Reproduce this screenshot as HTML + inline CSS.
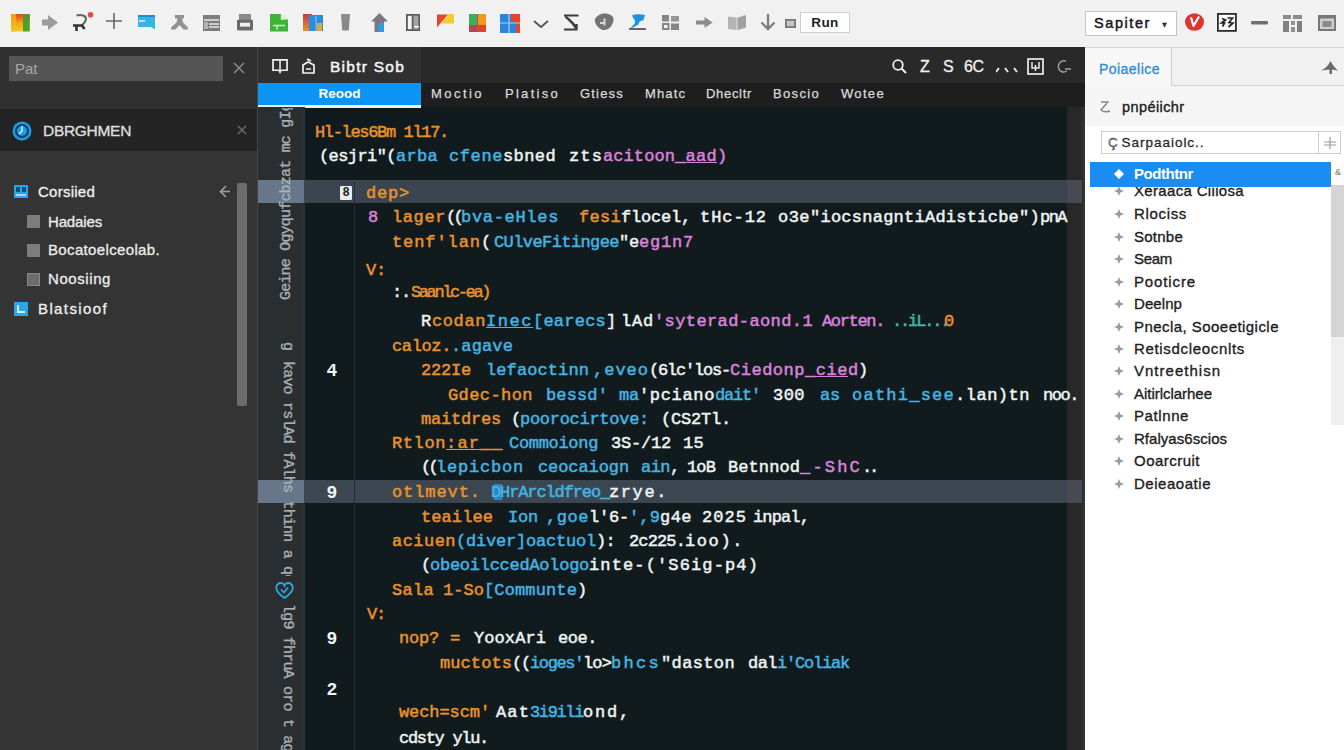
<!DOCTYPE html>
<html lang="en">
<head>
<meta charset="utf-8">
<title>Editor</title>
<style>
*{box-sizing:border-box;margin:0;padding:0}
html,body{width:1344px;height:750px;overflow:hidden;background:#111b1d;font-family:"Liberation Sans",sans-serif}
.abs,.abs>*{position:absolute}
#tb{position:absolute;left:0;top:0;width:1344px;height:48px;background:#f1f1f1;border-bottom:1px solid #d9d9d9}
#tb svg{position:absolute;overflow:visible}
#left{position:absolute;left:0;top:47px;width:258px;height:703px;background:#343434;overflow:hidden}
#ed{position:absolute;left:258px;top:47px;width:827px;height:703px;background:#111b1d;overflow:hidden}
#right{position:absolute;left:1085px;top:47px;width:259px;height:703px;background:#ffffff;overflow:hidden}
.ln{position:absolute;left:-258px;height:28px;width:1344px;line-height:28px;font-family:"Liberation Mono",monospace;font-size:17px;white-space:pre}
.s{position:absolute;top:0;white-space:pre;-webkit-text-stroke:0.5px currentColor}
.t{position:absolute;white-space:pre}
.tab{top:38px;font-size:13px;line-height:18px;color:#dadada;-webkit-text-stroke:.25px #dadada}
.vt{width:20px;writing-mode:vertical-rl;font-family:"Liberation Mono",monospace;font-size:15px;line-height:20px;color:#a8b0b5;letter-spacing:-.8px;overflow:hidden;-webkit-text-stroke:.35px #a8b0b5}
.num{left:60px;width:28px;text-align:center;font:bold 18px/24px "Liberation Mono",monospace;color:#f2f4f4}
.hi{top:10px;font:16px/20px "Liberation Sans",sans-serif;color:#f0f0f0;-webkit-text-stroke:.3px #f0f0f0}
</style>
</head>
<body>
<div id="tb">
<!-- 1 colour square -->
<svg style="left:10.700px;top:13.600px" width="18.700" height="17.400"><defs><linearGradient id="g1" x1="0" y1="0" x2="0" y2="1"><stop offset="0" stop-color="#e04a1c"/><stop offset=".55" stop-color="#f4a818"/><stop offset="1" stop-color="#f8cc20"/></linearGradient><linearGradient id="g1b" x1="0" y1="0" x2="0" y2="1"><stop offset="0" stop-color="#f09a18"/><stop offset="1" stop-color="#f8c420"/></linearGradient><linearGradient id="g1c" x1="0" y1="0" x2="0" y2="1"><stop offset="0" stop-color="#5c8a38"/><stop offset=".5" stop-color="#4aa02e"/><stop offset="1" stop-color="#4aa628"/></linearGradient></defs><rect width="18.700" height="17.400" rx="1" fill="url(#g1)"/><rect width="5" height="17.400" fill="url(#g1b)"/><rect x="12" width="6.700" height="17.400" fill="url(#g1c)"/></svg>
<!-- 2 grey arrow -->
<svg style="left:42px;top:14.500px" width="16" height="15"><path d="M0 4.500h6V0l10 7.500L6 15v-4.500H0z" fill="#9c9c9c"/></svg>
<!-- 3 R icon with red dot -->
<svg style="left:72px;top:13px" width="22" height="19"><path d="M4.500 2.500C9 1 14.500 2.500 14 6.500 13.500 9 12 10.500 10 12" fill="none" stroke="#5e665e" stroke-width="2"/><path d="M1 12.500h10.500M4.500 12.500v5.500M10 12.500l2.500 3.500" fill="none" stroke="#333" stroke-width="2.6"/><circle cx="18.500" cy="1.800" r="2.800" fill="#e4483e"/></svg>
<!-- 4 plus -->
<svg style="left:105px;top:12px" width="18" height="18"><path d="M9 1v16M1 9h16" stroke="#666" stroke-width="1.6"/></svg>
<!-- 5 blue card -->
<svg style="left:138px;top:14.500px" width="17" height="15"><path d="M0 0h17v14.500L13 12H0z" fill="#36b4ea"/><path d="M0 1h17" stroke="#1f8ccc" stroke-width="2"/><path d="M1 6h6" stroke="#e8f6ff" stroke-width="1.500"/></svg>
<!-- 6 grey figure -->
<svg style="left:171px;top:15px" width="17" height="15"><path d="M4 0h9v3.500h-2l1 4 5 5v2h-4.500l-4-4.500-4 4.500H0v-2l5.500-5 1-4H4z" fill="#929292"/></svg>
<!-- 7 table -->
<svg style="left:203px;top:14.500px" width="17" height="16"><rect width="17" height="16" fill="#7d7d7d"/><path d="M1 5h15M6 9h10M6 12h10" stroke="#e8e8e8" stroke-width="1.4"/><rect x="1" y="7" width="4" height="7" fill="#e8e8e8" opacity=".5"/></svg>
<!-- 8 printer -->
<svg style="left:237px;top:14px" width="16" height="17" viewBox="0 0 16 17.500" preserveAspectRatio="none"><rect x="2" width="12" height="7" fill="#8a8a8a"/><rect y="6" width="16" height="11" rx="1" fill="#6a6a6a"/><rect x="3" y="9" width="10" height="4" fill="#eee"/></svg>
<!-- 9 green doc -->
<svg style="left:270px;top:14px" width="18" height="17.500"><path d="M0 0h11l7 5.500v12H0z" fill="#3cb43a"/><path d="M11 0v5.500h7z" fill="#e8f6e8"/><path d="M11.500 0v6" stroke="#e8f6e8" stroke-width="1.300"/><path d="M3 11.500h12M7 11.500v4" stroke="#c8ecc8" stroke-width="1.600"/></svg>
<!-- 10 blue/orange docs -->
<svg style="left:302.500px;top:14px" width="20" height="17"><defs><linearGradient id="g10" x1="0" y1="0" x2="0" y2="1"><stop offset="0" stop-color="#c03e48"/><stop offset="1" stop-color="#e8902a"/></linearGradient></defs><rect width="9" height="17" fill="url(#g10)"/><rect x="6" y="1" width="14" height="16" fill="#2a8ee0"/><rect x="12" y="2" width="2" height="15" fill="#58aef0"/><rect x="14" y="9" width="5" height="8" fill="#e0a83a"/></svg>
<!-- 11 pillar -->
<svg style="left:341px;top:14px" width="9" height="17"><path d="M0 0h9l-1.200 16.500H1.200z" fill="#8a8a8a"/></svg>
<!-- 12 up arrow house -->
<svg style="left:371px;top:13px" width="17" height="19"><path d="M8.500 0l8.500 8.500h-4V19H3.500V8.500H0z" fill="#7a7684"/><rect x="7.500" y="10" width="5.500" height="9" fill="#2a9ee0"/></svg>
<!-- 13 book panel -->
<svg style="left:406px;top:14px" width="14" height="17"><rect x=".8" y=".8" width="12.400" height="15.400" fill="#a4a4a4" stroke="#5a5a5a" stroke-width="1.600"/><rect x="2" y="2" width="3.500" height="13" fill="#f4f4f4"/><rect x="6" y="1.600" width="1.400" height="14" fill="#5a5a5a"/><rect x="8" y="12" width="5" height="1.500" fill="#eee"/></svg>
<!-- 14 flag -->
<svg style="left:437px;top:14px" width="17" height="14"><path d="M0 .5h11L0 13.500z" fill="#e8452c"/><path d="M11.500 0H17v9.500H4.500z" fill="#f4cc2c"/></svg>
<!-- 15 grid colours -->
<svg style="left:469px;top:13.500px" width="17" height="18"><rect width="17" height="18" fill="#c8463a"/><rect width="8" height="11" fill="#3dae5a"/><rect x="9" width="8" height="11" fill="#f0981c"/><rect y="11.500" width="8" height="6.500" fill="#ae4a58"/><rect x="9" y="11.500" width="8" height="6.500" fill="#e0432c"/></svg>
<!-- 16 blue/red grid -->
<svg style="left:500px;top:14px" width="20" height="19"><rect width="20" height="19" rx="1" fill="#2a86dc"/><path d="M11 0h9v19h-4V8h-5z" fill="#e4452c"/><path d="M0 9h20M9 0v19" stroke="#dceeff" stroke-width="1.2" opacity=".7"/></svg>
<!-- 17 chevron -->
<svg style="left:533px;top:20px" width="16" height="9"><path d="M1 1l7 6 7-6" fill="none" stroke="#555" stroke-width="1.8"/></svg>
<!-- 18 sigma -->
<svg style="left:563px;top:14px" width="17" height="17"><path d="M1 1.500h14.500M1 15.500h13.500" fill="none" stroke="#3c3c3c" stroke-width="2.2"/><path d="M2.500 2.500C6 6 10 8 13 14M13.500 10v5" fill="none" stroke="#3c3c3c" stroke-width="2.4"/></svg>
<!-- 19 shield -->
<svg style="left:594px;top:13px" width="20" height="18"><path d="M1 6C3 2 8 0 12 0.500 16 1 20 3 19.500 7 19 12 16 16 11 17 7 17.500 3 14 1.500 10 1 8.500 0.500 7.500 1 6z" fill="#747474"/><path d="M6 10h4M10.500 5.500v7" stroke="#d8d8d8" stroke-width="2"/></svg>
<!-- 20 blue person -->
<svg style="left:628px;top:14px" width="19" height="17"><path d="M4 1.500C7 0 13 0 17 1l-1.500 5-4 1.500-1 3L6 13l-4 2 5-6V7z" fill="#1f93e2"/><path d="M1 15h17" stroke="#555" stroke-width="1.8"/></svg>
<!-- 21 four squares -->
<svg style="left:662px;top:14.700px" width="17" height="15"><rect width="7" height="6.500" fill="#858585"/><rect x="9" y="1" width="8" height="5.500" fill="#969696"/><rect x="1" y="9" width="5.500" height="5" fill="#f4f4f4" stroke="#858585" stroke-width="2"/><rect x="9" y="8.500" width="8" height="6.500" fill="#858585"/></svg>
<!-- 22 arrow -->
<svg style="left:696px;top:17px" width="16.500" height="11"><path d="M0 3.500h8.500V0l8 5.500-8 5.500V7.500H0z" fill="#8c8c8c"/></svg>
<!-- 23 book -->
<svg style="left:728px;top:14.700px" width="18" height="15"><path d="M0 1.500l8 1v12.500l-8-1z" fill="#b4b4b4"/><path d="M10 2.500l8-2.500v12.500l-8 2.500z" fill="#a2a2a2"/><rect x="8" y="2.500" width="2" height="12.500" fill="#c8c8c8"/></svg>
<!-- 24 down arrow -->
<svg style="left:760px;top:14px" width="16" height="17"><path d="M8 0v14.500M1.500 8.500l6.500 6.500 6.500-6.500" fill="none" stroke="#7c7c7c" stroke-width="2.300"/></svg>
<!-- 25 small square -->
<svg style="left:784.500px;top:18.500px" width="11" height="9"><rect x=".9" y=".9" width="9.200" height="7.200" fill="#c4c4c4" stroke="#777" stroke-width="1.800"/></svg>
<div class="t" style="left:800px;top:12px;width:50px;height:21px;background:#fff;border:1px solid #cfcfcf;font-size:13.5px;line-height:19px;text-align:center;color:#222;font-weight:bold;letter-spacing:.4px">Run</div>
<div class="t" style="left:1085px;top:11px;width:92px;height:25px;background:#fff;border:1px solid #c4c4c4;font-size:14.5px;line-height:23px;padding-left:8px;color:#1a1a1a;-webkit-text-stroke:.5px #1a1a1a"><span style="letter-spacing:1.58px">Sapiter</span><span style="position:absolute;left:75px;top:1px;font-size:7px;color:#333">&#9660;</span></div>
<!-- red circle -->
<svg style="left:1185px;top:13px" width="19" height="18"><ellipse cx="9.500" cy="9" rx="9.500" ry="8.800" fill="#e1322e"/><path d="M6 4.500l2.500 8.500L14 3.500" stroke="#fff" stroke-width="2.200" fill="none" stroke-linejoin="round"/></svg>
<!-- boxed icon -->
<svg style="left:1217px;top:13px" width="20" height="19"><rect x=".9" y=".9" width="18" height="17" fill="#fbfbfb" stroke="#222" stroke-width="1.700"/><path d="M5 5.500l3.500 1.500-4 3 3 0-2 3.500M10.500 5h5l-3.500 4.500 4 .5-4.500 4" fill="none" stroke="#222" stroke-width="1.700"/></svg>
<!-- minus -->
<svg style="left:1251px;top:21px" width="17" height="4"><rect width="17" height="3.4" rx="1" fill="#6e6e6e"/></svg>
<!-- grid -->
<svg style="left:1283px;top:14.500px" width="19" height="17"><rect width="8" height="4" fill="#8a8a8a"/><rect x="10" width="9" height="4" fill="#8a8a8a"/><rect y="6" width="6" height="11" fill="#808080"/><rect x="8" y="6" width="4" height="4" fill="#909090"/><rect x="14" y="6" width="5" height="11" fill="#808080"/><rect x="8" y="12" width="4" height="5" fill="#909090"/></svg>
<!-- box -->
<svg style="left:1317.500px;top:14.500px" width="18" height="16"><rect x="1" y="1" width="16" height="14" fill="#cfcfcf" stroke="#787878" stroke-width="2"/><rect x="1" y="1" width="16" height="2.500" fill="#787878"/><rect x="4.500" y="6" width="9" height="6" fill="#8a8a8a"/></svg>
</div>
<div id="left">
<div class="t" style="left:0;top:0;width:258px;height:62px;background:#303030"></div>
<div class="t" style="left:9px;top:9px;width:214px;height:25px;background:#555555;color:#a8a8a8;font-size:15px;line-height:25px;padding-left:6px">Pat</div>
<svg style="position:absolute;left:233px;top:15px" width="12" height="12"><path d="M1 1l10 10M11 1L1 11" stroke="#888" stroke-width="1.6"/></svg>
<div class="t" style="left:0;top:62px;width:258px;height:42px;background:#242424"></div>
<svg style="position:absolute;left:12px;top:74px" width="20" height="20"><circle cx="10" cy="10" r="9.5" fill="#1c9be6"/><circle cx="10" cy="10" r="6" fill="none" stroke="#0a3c66" stroke-width="2"/><path d="M10 5v5l-3 3" stroke="#cfeaff" stroke-width="1.6" fill="none"/></svg>
<div class="t" style="left:43px;top:74px;font-size:15.5px;line-height:20px;color:#dcdcdc;-webkit-text-stroke:.4px #dcdcdc"><span style="letter-spacing:-0.30px">DBRGHMEN</span></div>
<svg style="position:absolute;left:237px;top:77.500px" width="10" height="10"><path d="M1 1l8 8M9 1L1 9" stroke="#6a6a6a" stroke-width="1.5"/></svg>

<svg style="position:absolute;left:14px;top:138px" width="14" height="13"><rect width="14" height="13" fill="#2aa6e8"/><path d="M2 2h4v5H2zM8 2h4v5H8z" fill="#0d4f80"/><path d="M2 10h10" stroke="#d8f0ff" stroke-width="1.4"/></svg>
<div class="t" style="left:38px;top:135px;font-size:15px;line-height:20px;color:#f0f0f0;-webkit-text-stroke:.3px #f0f0f0"><span style="letter-spacing:0.25px">Corsiied</span></div>
<svg style="position:absolute;left:219px;top:138px" width="12" height="13"><path d="M7 1L1.5 6.5 7 12M2 6.500h9" fill="none" stroke="#a0a0a0" stroke-width="1.6"/></svg>
<div class="t" style="left:237px;top:136px;width:10px;height:223px;background:#6c6c6c;border-radius:2px"></div>

<div class="t" style="left:27px;top:168px;width:13px;height:13px;background:#7c7c7c"></div>
<div class="t" style="left:48px;top:165px;font-size:15px;line-height:20px;color:#ececec;-webkit-text-stroke:.3px #ececec"><span style="letter-spacing:-0.15px">Hadaies</span></div>
<div class="t" style="left:27px;top:197px;width:13px;height:13px;background:#7c7c7c"></div>
<div class="t" style="left:48px;top:193px;font-size:15px;line-height:20px;color:#ececec;-webkit-text-stroke:.3px #ececec"><span style="letter-spacing:0.35px">Bocatoelceolab.</span></div>
<div class="t" style="left:27px;top:226px;width:13px;height:13px;background:#6c6c6c;border:1px solid #888"></div>
<div class="t" style="left:48px;top:222px;font-size:15px;line-height:20px;color:#ececec;-webkit-text-stroke:.3px #ececec"><span style="letter-spacing:0.58px">Noosiing</span></div>
<svg style="position:absolute;left:14px;top:255px" width="14" height="14"><rect width="14" height="14" fill="#2aa6e8"/><path d="M4 3v7h7" stroke="#d8f0ff" stroke-width="1.8" fill="none"/></svg>
<div class="t" style="left:38px;top:252px;font-size:15px;line-height:20px;color:#f0f0f0;-webkit-text-stroke:.3px #f0f0f0"><span style="letter-spacing:1.39px">Blatsioof</span></div>
<div class="t" style="left:257px;top:0;width:1px;height:703px;background:#454545"></div>
</div>
<div id="ed">
<!-- header -->
<div class="t" style="left:0;top:0;width:827px;height:36px;background:#292929"></div>
<div class="t" style="left:0;top:0;width:163px;height:36px;background:#303030"></div>
<svg style="position:absolute;left:14px;top:11.500px" width="17" height="15" viewBox="0 0 18 16"><path d="M1 1h15v11H9.500l-1 2-1-2H1z" fill="none" stroke="#f2f2f2" stroke-width="1.8"/><path d="M8.500 1v11" stroke="#f2f2f2" stroke-width="1.6"/></svg>
<svg style="position:absolute;left:43px;top:11px" width="15" height="16"><path d="M2 15V7l5-3 6 3v8zM6 1l4 2M5 11h5" fill="none" stroke="#f2f2f2" stroke-width="1.7"/></svg>
<div class="t" style="left:72px;top:10px;font-size:15.5px;line-height:20px;color:#f4f4f4;-webkit-text-stroke:.5px #f4f4f4"><span style="letter-spacing:1.25px">Bibtr Sob</span></div>
<svg style="position:absolute;left:634px;top:12px" width="15" height="15"><circle cx="6" cy="6" r="4.800" fill="none" stroke="#f0f0f0" stroke-width="1.8"/><path d="M9.500 9.500l4.500 4.500" stroke="#f0f0f0" stroke-width="2"/></svg>
<div class="t hi" style="left:662px">Z</div>
<div class="t hi" style="left:685px">S</div>
<div class="t hi" style="left:706px;letter-spacing:-.5px">6C</div>
<svg style="position:absolute;left:738px;top:20px" width="22" height="6"><path d="M0 5l3-4M9 1l3 4M18 1l3 4" stroke="#e8e8e8" stroke-width="2"/></svg>
<svg style="position:absolute;left:769px;top:11px" width="17" height="17"><rect x="1" y="1" width="15" height="15" fill="none" stroke="#ececec" stroke-width="1.7"/><path d="M5 4v6h7V4M8.500 7v6" stroke="#ececec" stroke-width="1.5" fill="none"/></svg>
<svg style="position:absolute;left:799px;top:13px" width="15" height="14"><path d="M9 1C4 0 1 3 1.500 7.500 2 12 7 13 10 11M8 9h6" fill="none" stroke="#a0a0a0" stroke-width="1.5"/></svg>
<!-- tab row -->
<div class="t" style="left:0;top:36px;width:827px;height:24px;background:#1e1e1e"></div>
<div class="t" style="left:0;top:36px;width:163px;height:22px;background:#0b94f4"></div>
<div class="t" style="left:0;top:58px;width:163px;height:2.5px;background:#e6f2fc"></div>
<div class="t" style="left:0;top:38px;width:163px;text-align:center;font-size:13.5px;line-height:18px;color:#fff;font-weight:bold">Reood</div>
<div class="t tab" style="left:173px"><span style="letter-spacing:2.45px">Moctio</span></div>
<div class="t tab" style="left:247px"><span style="letter-spacing:2.28px">Platiso</span></div>
<div class="t tab" style="left:322px"><span style="letter-spacing:1.19px">Gtiess</span></div>
<div class="t tab" style="left:387px"><span style="letter-spacing:1.12px">Mhatc</span></div>
<div class="t tab" style="left:448px"><span style="letter-spacing:0.69px">Dhecltr</span></div>
<div class="t tab" style="left:515px"><span style="letter-spacing:1.33px">Boscio</span></div>
<div class="t tab" style="left:583px"><span style="letter-spacing:1.33px">Wotee</span></div>
<!-- gutter -->
<div class="t" style="left:0;top:60px;width:46px;height:643px;background:#2b2e30"></div>
<div class="t" style="left:45px;top:60px;width:1.500px;height:643px;background:#22383f"></div>
<!-- highlight bands -->
<div class="t" style="left:0;top:133px;width:46px;height:23px;background:#66778a"></div>
<div class="t" style="left:46px;top:133px;width:778px;height:23px;background:#3a454f"></div>
<div class="t" style="left:0;top:433px;width:46px;height:23px;background:#66778a"></div>
<div class="t" style="left:46px;top:433px;width:778px;height:23px;background:#3b4650"></div>
<!-- indent guide -->
<div class="t" style="left:95.500px;top:134px;width:1.500px;height:569px;background:#1f3038"></div>
<!-- gutter vertical text -->
<div class="t vt" style="left:19px;top:61px;height:192px;transform:rotate(180deg);text-align:right">Geine Ogyqufcbzat mc gIglo</div>
<div class="t vt" style="left:19px;top:295px;height:12px">g</div>
<div class="t vt" style="left:19px;top:314px;height:215px">kavo rslAd fAlhs thinn a qelaoscq</div>
<svg style="position:absolute;left:17px;top:534px" width="19" height="18"><path d="M9.500 17C2 12 0 7.500 2 4 4 1 8.500 1.500 9.500 4.500c1-3 5.500-3.500 7.500-.5 2 3.500 0 8-7.500 13z" fill="none" stroke="#2aa8e6" stroke-width="1.8"/><path d="M6 8.500l3 3 4-5" fill="none" stroke="#2aa8e6" stroke-width="1.7"/></svg>
<div class="t vt" style="left:19px;top:557px;height:146px">lg9 fhruA oro t ago zoe</div>
<!-- line numbers -->
<div class="t" style="left:82px;top:139px;width:12px;height:14px;background:#e8ecee;color:#1a2226;font:bold 12px/14px 'Liberation Mono',monospace;text-align:center;border-radius:1px">8</div>
<div class="t num" style="top:312px">4</div>
<div class="t num" style="top:434px">9</div>
<div class="t num" style="top:580px">9</div>
<div class="t num" style="top:631px">2</div>
<!-- right scrollbar -->
<div class="t" style="left:809px;top:60px;width:18px;height:643px;background:linear-gradient(90deg,rgba(40,40,40,.92),rgba(44,44,44,.8) 70%,rgba(60,60,60,.8))"></div>
<div class="t" style="left:809px;top:133px;width:15px;height:23px;background:#474b51"></div>
<div class="t" style="left:809px;top:433px;width:15px;height:23px;background:#474b51"></div>
<div class="t" style="left:236px;top:437px;width:8px;height:16px;background:#2a8fdc;opacity:.85"></div>
<div class="ln" style="top:72px"><span class="s" style="left:315px;color:#e8922e;letter-spacing:-1.34px;">Hl-les6Bm 1l17.</span></div>
<div class="ln" style="top:96px"><span class="s" style="left:319px;color:#eef3f3;letter-spacing:-0.58px;">(esjri&quot;(</span><span class="s" style="left:396px;color:#45b4e2;letter-spacing:0.30px;">arba</span><span class="s" style="left:449px;color:#45b4e2;letter-spacing:0.60px;">cfene</span><span class="s" style="left:503px;color:#eef3f3;letter-spacing:0.40px;">sbned</span><span class="s" style="left:569px;color:#eef3f3;letter-spacing:1.13px;">zts</span><span class="s" style="left:603px;color:#d982dc;letter-spacing:0.08px;">acitoon</span><span class="s" style="left:675px;color:#d982dc;letter-spacing:0.30px;text-decoration:underline;">_aad</span><span class="s" style="left:717px;color:#d982dc;letter-spacing:0.80px;">)</span></div>
<div class="ln" style="top:133px"><span class="s" style="left:366px;color:#e8922e;letter-spacing:0.80px;">dep&gt;</span></div>
<div class="ln" style="top:157px"><span class="s" style="left:368px;color:#d982dc;letter-spacing:0.80px;">8</span><span class="s" style="left:392px;color:#e8922e;letter-spacing:0.60px;">lager</span><span class="s" style="left:446px;color:#eef3f3;letter-spacing:-2.70px;">((</span><span class="s" style="left:461px;color:#45b4e2;letter-spacing:0.69px;">bva-eHles</span><span class="s" style="left:579px;color:#e8922e;letter-spacing:0.30px;">fesi</span><span class="s" style="left:621px;color:#eef3f3;letter-spacing:-0.20px;">flocel,</span><span class="s" style="left:700px;color:#eef3f3;letter-spacing:0.96px;">tHc-12</span><span class="s" style="left:778px;color:#eef3f3;letter-spacing:0.46px;">o3e</span><span class="s" style="left:810px;color:#eef3f3;letter-spacing:0.25px;">&quot;iocsnagntiAdisticbe&quot;)</span><span class="s" style="left:1040px;color:#eef3f3;letter-spacing:-1.54px;">pnA</span></div>
<div class="ln" style="top:182px"><span class="s" style="left:392px;color:#e8922e;letter-spacing:0.92px;">tenf&#x27;lan</span><span class="s" style="left:481px;color:#eef3f3;letter-spacing:2.80px;">(</span><span class="s" style="left:494px;color:#45b4e2;letter-spacing:-0.59px;">CUlveFitingee</span><span class="s" style="left:619px;color:#eef3f3;letter-spacing:-0.20px;">&quot;e</span><span class="s" style="left:639px;color:#d982dc;letter-spacing:0.80px;">eg1n7</span></div>
<div class="ln" style="top:210px"><span class="s" style="left:366px;color:#e8922e;letter-spacing:-0.20px;">V:</span></div>
<div class="ln" style="top:232px"><span class="s" style="left:392px;color:#eef3f3;letter-spacing:-1.20px;">:.</span><span class="s" style="left:411px;color:#e8922e;letter-spacing:-2.40px;">Saanlc-ea)</span></div>
<div class="ln" style="top:261px"><span class="s" style="left:421px;color:#eef3f3;letter-spacing:0.80px;">R</span><span class="s" style="left:432px;color:#e8922e;letter-spacing:0.60px;">codan</span><span class="s" style="left:486px;color:#45b4e2;letter-spacing:1.55px;text-decoration:underline;">Inec</span><span class="s" style="left:533px;color:#45b4e2;letter-spacing:0.23px;">[earecs</span><span class="s" style="left:606px;color:#eef3f3;letter-spacing:-0.20px;">]</span><span class="s" style="left:621px;color:#eef3f3;letter-spacing:0.80px;">lAd</span><span class="s" style="left:654px;color:#d982dc;letter-spacing:0.40px;">&#x27;syterad-aond.1</span><span class="s" style="left:822px;color:#d982dc;letter-spacing:-1.34px;">Aorten.</span><span class="s" style="left:892px;color:#3fb8a8;letter-spacing:-2.14px;">..iL...</span><span class="s" style="left:944px;color:#e8922e;letter-spacing:1.00px;">0</span></div>
<div class="ln" style="top:286px"><span class="s" style="left:392px;color:#e8922e;letter-spacing:-0.37px;">caloz.</span><span class="s" style="left:451px;color:#45b4e2;letter-spacing:0.13px;">.agave</span></div>
<div class="ln" style="top:310px"><span class="s" style="left:421px;color:#e8922e;letter-spacing:-0.20px;">222Ie</span><span class="s" style="left:486px;color:#45b4e2;letter-spacing:0.10px;">lefaoctinn</span><span class="s" style="left:593px;color:#45b4e2;letter-spacing:1.00px;">,eveo</span><span class="s" style="left:649px;color:#eef3f3;letter-spacing:-1.20px;">(6lc&#x27;los-</span><span class="s" style="left:730px;color:#d982dc;letter-spacing:0.51px;">Ciedonp</span><span class="s" style="left:805px;color:#d982dc;letter-spacing:0.55px;text-decoration:underline;">_cie</span><span class="s" style="left:848px;color:#d982dc;letter-spacing:-0.20px;">d</span><span class="s" style="left:858px;color:#eef3f3;letter-spacing:0.80px;">)</span></div>
<div class="ln" style="top:335px"><span class="s" style="left:448px;color:#e8922e;letter-spacing:0.42px;">Gdec-hon</span><span class="s" style="left:546px;color:#45b4e2;letter-spacing:0.13px;">bessd&#x27;</span><span class="s" style="left:619px;color:#45b4e2;letter-spacing:-0.20px;">ma</span><span class="s" style="left:639px;color:#eef3f3;letter-spacing:0.66px;">&#x27;pciano</span><span class="s" style="left:715px;color:#45b4e2;letter-spacing:-1.20px;">dait&#x27;</span><span class="s" style="left:773px;color:#eef3f3;letter-spacing:0.46px;">300</span><span class="s" style="left:820px;color:#45b4e2;letter-spacing:-0.20px;">as</span><span class="s" style="left:852px;color:#45b4e2;letter-spacing:1.24px;">oathi_see</span><span class="s" style="left:955px;color:#eef3f3;letter-spacing:0.51px;">.lan)tn</span><span class="s" style="left:1043px;color:#eef3f3;letter-spacing:-1.45px;">noo.</span></div>
<div class="ln" style="top:359px"><span class="s" style="left:421px;color:#e8922e;letter-spacing:-0.20px;">maitdres</span><span class="s" style="left:511px;color:#eef3f3;letter-spacing:-1.20px;">(</span><span class="s" style="left:520px;color:#45b4e2;letter-spacing:-0.28px;">poorocirtove:</span><span class="s" style="left:661px;color:#eef3f3;letter-spacing:-0.20px;">(CS2Tl.</span></div>
<div class="ln" style="top:383px"><span class="s" style="left:392px;color:#e8922e;letter-spacing:0.60px;">Rtlon</span><span class="s" style="left:446px;color:#e8922e;letter-spacing:1.20px;text-decoration:underline;">:ar__</span><span class="s" style="left:509px;color:#45b4e2;letter-spacing:-0.31px;">Commoiong</span><span class="s" style="left:611px;color:#eef3f3;letter-spacing:-0.20px;">3S-/12</span><span class="s" style="left:683px;color:#eef3f3;letter-spacing:0.30px;">15</span></div>
<div class="ln" style="top:407px"><span class="s" style="left:421px;color:#eef3f3;letter-spacing:-2.70px;">((</span><span class="s" style="left:436px;color:#45b4e2;letter-spacing:0.80px;">lepicbon</span><span class="s" style="left:538px;color:#45b4e2;letter-spacing:-0.09px;">ceocaiogn</span><span class="s" style="left:641px;color:#45b4e2;letter-spacing:-0.54px;">ain</span><span class="s" style="left:670px;color:#eef3f3;letter-spacing:-0.20px;">,</span><span class="s" style="left:687px;color:#eef3f3;letter-spacing:-0.87px;">1oB</span><span class="s" style="left:728px;color:#eef3f3;letter-spacing:0.08px;">Betnnod</span><span class="s" style="left:800px;color:#d982dc;letter-spacing:2.20px;">_-ShC</span><span class="s" style="left:862px;color:#eef3f3;letter-spacing:-3.20px;">..</span></div>
<div class="ln" style="top:432px"><span class="s" style="left:392px;color:#e8922e;letter-spacing:0.92px;">otlmevt.</span><span class="s" style="left:491px;color:#45b4e2;letter-spacing:-1.12px;">DHrArcldfreo_</span><span class="s" style="left:609px;color:#eef3f3;letter-spacing:1.60px;">zrye.</span></div>
<div class="ln" style="top:457px"><span class="s" style="left:421px;color:#e8922e;letter-spacing:0.08px;">teailee</span><span class="s" style="left:508px;color:#45b4e2;letter-spacing:-0.20px;">Ion</span><span class="s" style="left:546px;color:#45b4e2;letter-spacing:0.55px;">,goe</span><span class="s" style="left:589px;color:#eef3f3;letter-spacing:-0.20px;">l&#x27;6-</span><span class="s" style="left:629px;color:#45b4e2;letter-spacing:0.13px;">&#x27;,9</span><span class="s" style="left:660px;color:#eef3f3;letter-spacing:0.46px;">g4e</span><span class="s" style="left:702px;color:#eef3f3;letter-spacing:1.05px;">2025</span><span class="s" style="left:753px;color:#eef3f3;letter-spacing:-0.87px;">inpal,</span></div>
<div class="ln" style="top:481px"><span class="s" style="left:392px;color:#e8922e;letter-spacing:0.46px;">aciuen</span><span class="s" style="left:456px;color:#45b4e2;letter-spacing:-0.20px;">(diver]oactuol</span><span class="s" style="left:596px;color:#eef3f3;letter-spacing:-0.70px;">):</span><span class="s" style="left:629px;color:#eef3f3;letter-spacing:-0.87px;">2c225.</span><span class="s" style="left:685px;color:#eef3f3;letter-spacing:1.60px;">ioo).</span></div>
<div class="ln" style="top:505px"><span class="s" style="left:421px;color:#eef3f3;letter-spacing:-1.20px;">(</span><span class="s" style="left:430px;color:#45b4e2;letter-spacing:-0.26px;">obeoilccedAologo</span><span class="s" style="left:589px;color:#eef3f3;letter-spacing:1.13px;">inte-(&#x27;S6ig-p4)</span></div>
<div class="ln" style="top:530px"><span class="s" style="left:392px;color:#e8922e;letter-spacing:0.30px;">Sala</span><span class="s" style="left:443px;color:#e8922e;letter-spacing:0.05px;">1-So</span><span class="s" style="left:484px;color:#45b4e2;letter-spacing:0.13px;">[Communte</span><span class="s" style="left:577px;color:#eef3f3;letter-spacing:2.80px;">)</span></div>
<div class="ln" style="top:554px"><span class="s" style="left:367px;color:#e8922e;letter-spacing:-1.20px;">V:</span></div>
<div class="ln" style="top:578px"><span class="s" style="left:399px;color:#e8922e;letter-spacing:-0.20px;">nop?</span><span class="s" style="left:450px;color:#e8922e;letter-spacing:1.80px;">=</span><span class="s" style="left:474px;color:#eef3f3;letter-spacing:0.08px;">YooxAri</span><span class="s" style="left:558px;color:#eef3f3;letter-spacing:-0.45px;">eoe.</span></div>
<div class="ln" style="top:603px"><span class="s" style="left:440px;color:#e8922e;letter-spacing:0.08px;">muctots</span><span class="s" style="left:512px;color:#eef3f3;letter-spacing:-1.20px;">((</span><span class="s" style="left:530px;color:#45b4e2;letter-spacing:-1.37px;">ioges&#x27;</span><span class="s" style="left:583px;color:#eef3f3;letter-spacing:-0.87px;">lo&gt;</span><span class="s" style="left:611px;color:#45b4e2;letter-spacing:2.30px;">bhcs</span><span class="s" style="left:661px;color:#eef3f3;letter-spacing:0.37px;">&quot;daston</span><span class="s" style="left:748px;color:#eef3f3;letter-spacing:-0.54px;">dal</span><span class="s" style="left:777px;color:#45b4e2;letter-spacing:-1.20px;">i&#x27;Coliak</span></div>
<div class="ln" style="top:652px"><span class="s" style="left:399px;color:#e8922e;letter-spacing:-0.09px;">wech=scm&#x27;</span><span class="s" style="left:496px;color:#eef3f3;letter-spacing:1.13px;">Aat</span><span class="s" style="left:530px;color:#45b4e2;letter-spacing:-1.37px;">3i9ili</span><span class="s" style="left:583px;color:#eef3f3;letter-spacing:1.80px;">ond,</span></div>
<div class="ln" style="top:678px"><span class="s" style="left:399px;color:#eef3f3;letter-spacing:-1.30px;">cdsty ylu.</span></div>
</div>
<div id="right">
<div class="t" style="left:0;top:0;width:259px;height:79px;background:#f5f5f5"></div>
<div class="t" style="left:86px;top:0;width:173px;height:39px;background:#f1f1f1;border-bottom:1px solid #cfcfcf;border-left:1px solid #cfcfcf"></div>
<div class="t" style="left:0;top:0;width:86px;height:39px;background:#f7f7f7"></div>
<div class="t" style="left:0;top:0;width:259px;height:1px;background:#d2d2d2"></div>
<div class="t" style="left:14px;top:12px;font-size:14px;line-height:20px;color:#2b8bd6;-webkit-text-stroke:.3px #2b8bd6"><span style="letter-spacing:0.46px">Poiaelice</span></div>
<svg style="position:absolute;left:236px;top:14px" width="18" height="14"><path d="M0 9.500C4 8 7 5 9.500 0c2 4 4.500 7 7.500 9.500l-6-1V13H8.500V8.500z" fill="#6a6a6a"/></svg>
<svg style="position:absolute;left:14px;top:54px" width="12" height="12"><path d="M2 1h8M8 2L2 9c2 2 6 2 9 1" fill="none" stroke="#888" stroke-width="1.5"/></svg>
<div class="t" style="left:37px;top:50px;font-size:14.5px;line-height:20px;color:#202020;-webkit-text-stroke:.35px #202020"><span style="letter-spacing:0.41px">pnpéiichr</span></div>
<div class="t" style="left:0;top:79px;width:259px;height:624px;background:#fff"></div>
<div class="t" style="left:16px;top:84px;width:240px;height:23px;background:#fff;border:1px solid #cbcbcb"></div>
<div class="t" style="left:233px;top:85px;width:1px;height:21px;background:#cbcbcb"></div>
<svg style="position:absolute;left:239px;top:90px" width="12" height="12"><path d="M0 5h12M0 8h12M6 0v12" stroke="#9a9a9a" stroke-width="1.2"/></svg>
<div class="t" style="left:23px;top:86px;font-size:13.5px;line-height:20px;color:#2a2a2a;-webkit-text-stroke:.3px #2a2a2a"><span style="color:#8a8a8a">&Ccedil;</span> <span style="letter-spacing:0.98px">Sarpaaiolc..</span></div>

<div class="t" style="left:246px;top:115px;width:13px;height:23px;background:#fcfcfc"></div>
<div class="t" style="left:246px;top:138px;width:13px;height:152px;background:#d5d5d5"></div>
<div class="t" style="left:246px;top:290px;width:13px;height:88px;background:#efefef"></div>
<div class="t" style="left:250px;top:119px;font-size:9px;line-height:12px;color:#777">&amp;</div>
<svg style="position:absolute;left:29px;top:139px" width="10" height="10"><path d="M5 0L6.400 3.600 10 5 6.400 6.400 5 10 3.600 6.400 0 5 3.600 3.600z" fill="#9a9a9a"/></svg><div class="t" style="left:49px;top:134px;font-size:15px;line-height:20px;color:#1e1e1e;-webkit-text-stroke:.35px #1e1e1e"><span style="letter-spacing:0.33px">Xeraaca Ciiiosa</span></div>
<svg style="position:absolute;left:29px;top:162px" width="10" height="10"><path d="M5 0L6.400 3.600 10 5 6.400 6.400 5 10 3.600 6.400 0 5 3.600 3.600z" fill="#9a9a9a"/></svg><div class="t" style="left:49px;top:157px;font-size:15px;line-height:20px;color:#1e1e1e;-webkit-text-stroke:.35px #1e1e1e"><span style="letter-spacing:0.67px">Rlociss</span></div>
<svg style="position:absolute;left:29px;top:185px" width="10" height="10"><path d="M5 0L6.400 3.600 10 5 6.400 6.400 5 10 3.600 6.400 0 5 3.600 3.600z" fill="#9a9a9a"/></svg><div class="t" style="left:49px;top:180px;font-size:15px;line-height:20px;color:#1e1e1e;-webkit-text-stroke:.35px #1e1e1e"><span style="letter-spacing:0.24px">Sotnbe</span></div>
<svg style="position:absolute;left:29px;top:207px" width="10" height="10"><path d="M5 0L6.400 3.600 10 5 6.400 6.400 5 10 3.600 6.400 0 5 3.600 3.600z" fill="#9a9a9a"/></svg><div class="t" style="left:49px;top:202px;font-size:15px;line-height:20px;color:#1e1e1e;-webkit-text-stroke:.35px #1e1e1e"><span style="letter-spacing:-0.30px">Seam</span></div>
<svg style="position:absolute;left:29px;top:230px" width="10" height="10"><path d="M5 0L6.400 3.600 10 5 6.400 6.400 5 10 3.600 6.400 0 5 3.600 3.600z" fill="#9a9a9a"/></svg><div class="t" style="left:49px;top:225px;font-size:15px;line-height:20px;color:#1e1e1e;-webkit-text-stroke:.35px #1e1e1e"><span style="letter-spacing:0.87px">Pooticre</span></div>
<svg style="position:absolute;left:29px;top:252px" width="10" height="10"><path d="M5 0L6.400 3.600 10 5 6.400 6.400 5 10 3.600 6.400 0 5 3.600 3.600z" fill="#9a9a9a"/></svg><div class="t" style="left:49px;top:247px;font-size:15px;line-height:20px;color:#1e1e1e;-webkit-text-stroke:.35px #1e1e1e"><span style="letter-spacing:0.08px">Deelnp</span></div>
<svg style="position:absolute;left:29px;top:275px" width="10" height="10"><path d="M5 0L6.400 3.600 10 5 6.400 6.400 5 10 3.600 6.400 0 5 3.600 3.600z" fill="#9a9a9a"/></svg><div class="t" style="left:49px;top:270px;font-size:15px;line-height:20px;color:#1e1e1e;-webkit-text-stroke:.35px #1e1e1e"><span style="letter-spacing:0.45px">Pnecla, Sooeetigicle</span></div>
<svg style="position:absolute;left:29px;top:297px" width="10" height="10"><path d="M5 0L6.400 3.600 10 5 6.400 6.400 5 10 3.600 6.400 0 5 3.600 3.600z" fill="#9a9a9a"/></svg><div class="t" style="left:49px;top:292px;font-size:15px;line-height:20px;color:#1e1e1e;-webkit-text-stroke:.35px #1e1e1e"><span style="letter-spacing:0.67px">Retisdcleocnlts</span></div>
<svg style="position:absolute;left:29px;top:319px" width="10" height="10"><path d="M5 0L6.400 3.600 10 5 6.400 6.400 5 10 3.600 6.400 0 5 3.600 3.600z" fill="#9a9a9a"/></svg><div class="t" style="left:49px;top:314px;font-size:15px;line-height:20px;color:#1e1e1e;-webkit-text-stroke:.35px #1e1e1e"><span style="letter-spacing:1.01px">Vntreethisn</span></div>
<svg style="position:absolute;left:29px;top:342px" width="10" height="10"><path d="M5 0L6.400 3.600 10 5 6.400 6.400 5 10 3.600 6.400 0 5 3.600 3.600z" fill="#9a9a9a"/></svg><div class="t" style="left:49px;top:337px;font-size:15px;line-height:20px;color:#1e1e1e;-webkit-text-stroke:.35px #1e1e1e"><span style="letter-spacing:-0.03px">Aitirlclarhee</span></div>
<svg style="position:absolute;left:29px;top:364px" width="10" height="10"><path d="M5 0L6.400 3.600 10 5 6.400 6.400 5 10 3.600 6.400 0 5 3.600 3.600z" fill="#9a9a9a"/></svg><div class="t" style="left:49px;top:359px;font-size:15px;line-height:20px;color:#1e1e1e;-webkit-text-stroke:.35px #1e1e1e"><span style="letter-spacing:0.59px">Patlnne</span></div>
<svg style="position:absolute;left:29px;top:387px" width="10" height="10"><path d="M5 0L6.400 3.600 10 5 6.400 6.400 5 10 3.600 6.400 0 5 3.600 3.600z" fill="#9a9a9a"/></svg><div class="t" style="left:49px;top:382px;font-size:15px;line-height:20px;color:#1e1e1e;-webkit-text-stroke:.35px #1e1e1e"><span style="letter-spacing:0.04px">Rfalyas6scios</span></div>
<svg style="position:absolute;left:29px;top:409px" width="10" height="10"><path d="M5 0L6.400 3.600 10 5 6.400 6.400 5 10 3.600 6.400 0 5 3.600 3.600z" fill="#9a9a9a"/></svg><div class="t" style="left:49px;top:404px;font-size:15px;line-height:20px;color:#1e1e1e;-webkit-text-stroke:.35px #1e1e1e"><span style="letter-spacing:0.48px">Ooarcruit</span></div>
<svg style="position:absolute;left:29px;top:432px" width="10" height="10"><path d="M5 0L6.400 3.600 10 5 6.400 6.400 5 10 3.600 6.400 0 5 3.600 3.600z" fill="#9a9a9a"/></svg><div class="t" style="left:49px;top:427px;font-size:15px;line-height:20px;color:#1e1e1e;-webkit-text-stroke:.35px #1e1e1e"><span style="letter-spacing:0.53px">Deieaoatie</span></div>
<div class="t" style="left:5px;top:115px;width:241px;height:25px;background:#1b8df2"></div>
<svg style="position:absolute;left:29px;top:122px" width="10" height="10"><path d="M5 0l5 5-5 5-5-5z" fill="#fff"/></svg>
<div class="t" style="left:49px;top:117px;font-size:15px;line-height:20px;color:#fff;font-weight:bold"><span style="letter-spacing:-0.44px">Podthtnr</span></div>
</div>

</body>
</html>
